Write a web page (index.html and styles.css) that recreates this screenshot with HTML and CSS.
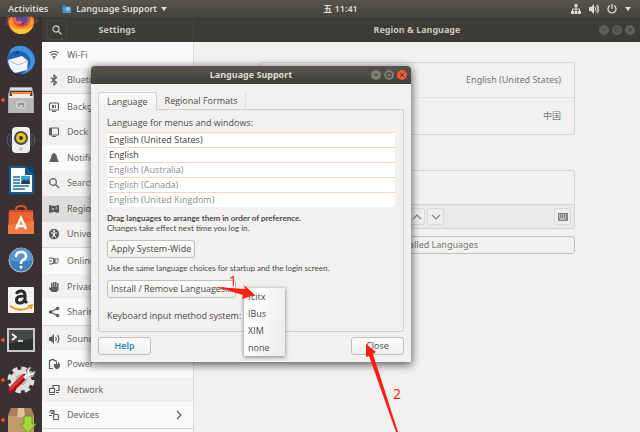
FILE: index.html
```html
<!DOCTYPE html>
<html lang="en">
<head>
<meta charset="utf-8">
<title>Language Support</title>
<link rel="stylesheet" href="styles.css">
</head>
<body>
<div class="desktop">
  <header class="topbar">
    <div class="topbar-left">
      <button class="bar-item">Activities</button>
      <button class="bar-item app-menu">
        <svg width="10" height="10" viewBox="0 0 10 10"><path d="M0 1h4l1 1h4v7H0z" fill="#2f71a5"/><path d="M1 3h8v6H1z" fill="#4d95c6"/><circle cx="6" cy="5" r="2" fill="#9bcbe8"/></svg>
        Language Support
        <svg width="6" height="4" viewBox="0 0 6 4"><path d="M0 0h6L3 4z" fill="#dfdbd2"/></svg>
      </button>
    </div>
    <time class="clock">五 11:41</time>
    <div class="topbar-right">
      <svg width="10" height="10" viewBox="0 0 10 10" fill="#dfdbd2"><path d="M3.500 0h3v3h-3zM0 7h3v3H0zM3.500 7h3v3h-3zM7 7h3v3H7z"/><path d="M5 3v4M1.500 7V5h7v2" fill="none" stroke="#dfdbd2"/></svg>
      <svg width="10" height="10" viewBox="0 0 10 10" fill="#dfdbd2"><path d="M0 3h2l3-3v10L2 7H0z"/><path d="M6 3q1.500 2 0 4M7.500 1.500q2.500 3.500 0 7M8.500 .5q3 4.500 0 9" fill="none" stroke="#dfdbd2" stroke-width=".9"/></svg>
      <svg width="10" height="10" viewBox="0 0 10 10" fill="none" stroke="#dfdbd2" stroke-width="1.300"><path d="M3 1.500a4 4 0 1 0 4 0M5 0v5"/></svg>
      <svg width="6" height="4" viewBox="0 0 6 4"><path d="M0 0h6L3 4z" fill="#dfdbd2"/></svg>
    </div>
  </header>

  <nav class="dock" aria-label="Dock">
    <svg class="app" viewBox="0 -2 30 30"><circle cx="15" cy="14" r="13" fill="#e8492f"/><path d="M3 14q-1 11 12 13 12-1 13-13l-3-6q0 12-10 12Q6 20 6 8z" fill="#f9922b"/><path d="M4 18q3 9 11 9 9 0 13-9-4 5-12 4-8 1-12-4z" fill="#fcc63c"/><circle cx="16" cy="12" r="6" fill="#5a3aa0"/><path d="M8 11q4 5 9 3-2 5-7 2z" fill="#f36c2c"/></svg>
    <svg class="app" viewBox="0 0 30 30"><circle cx="15" cy="15" r="14" fill="#1f62b6"/><path d="M5 4Q15-3 24 5q8 9 3 17-4 6-11 7 10-7 8-15Q21 5 10 6q-6 1-8 6z" fill="#3f93dc"/><path d="M2 15l14-4 6 5-1 9-12 3q-6-4-7-13z" fill="#f4f5f7"/><path d="M2 15l10 5 10-4" fill="none" stroke="#b8bdc9"/><path d="M8 8l5-3-1 4z" fill="#163f7d"/></svg>
    <svg class="app running" viewBox="0 0 30 30"><path d="M4 2h22l2 8v18H2V10z" fill="#a5a5a3"/><path d="M5 3h20l1 2H4z" fill="#dedede"/><path d="M4 6h22v5H4z" fill="#5b3427"/><path d="M5 7h20v2H5z" fill="#f2873b"/><path d="M6 9h18v2H6z" fill="#f8eee2"/><rect x="3" y="12" width="24" height="16" rx="1" fill="#b9b9b7"/><rect x="3" y="11" width="24" height="2" fill="#ededeb"/><rect x="11" y="17" width="8" height="6" rx="1" fill="#969694" stroke="#ededed"/><path d="M13 21h4" stroke="#fff"/></svg>
    <svg class="app" viewBox="0 0 30 30"><path d="M4 8q-6 7 0 14M26 8q6 7 0 14M6 9q-4 6 0 12M24 9q4 6 0 12" fill="none" stroke="#4d5b7e"/><rect x="6" y="2" width="18" height="26" rx="4" fill="#eeeeec"/><circle cx="15" cy="13" r="7" fill="#4b4b4b"/><circle cx="15" cy="13" r="5" fill="#e5c51c"/><circle cx="15" cy="13" r="2" fill="#333"/><circle cx="15" cy="24" r="2" fill="#c9c9c7"/></svg>
    <svg class="app" viewBox="0 0 30 30"><path d="M3 1h17l8 8v20H3z" fill="#155b94"/><path d="M5 3h14v7h7v17H5z" fill="#fff"/><path d="M19 1l9 9V1z" fill="#0f426e"/><path d="M7 12h7M7 15h7M7 18h7M7 21h16M7 24h12" stroke="#1b6aa5" stroke-width="1.300"/><rect x="15" y="11" width="9" height="8" fill="#35a5dc"/><path d="M15 18l3-4 2 2 2-2 2 4v1h-9z" fill="#243f52"/></svg>
    <svg class="app" viewBox="0 0 30 30"><path d="M10 7V4q0-3 5-3t5 3v3" fill="none" stroke="#d6532b" stroke-width="2"/><path d="M3 5h24l1 24H2z" fill="#e9652f"/><path d="M2 20l26-4v13H2z" fill="#f47a42"/><path d="M3 5h24v2H3z" fill="#cc4f26"/><path d="M10 24l5-11 5 11M10 21h10" fill="none" stroke="#fff" stroke-width="2.400"/></svg>
    <svg class="app" viewBox="0 0 30 30"><circle cx="15" cy="15" r="12" fill="#3c7fba" stroke="#a7cbe5"/><path d="M3 15a12 12 0 0 1 24 0q-12 4-24 0z" fill="#5797cc"/><path d="M10 12q0-5 5-5t5 4q0 3-3 4-2 1-2 4" fill="none" stroke="#fff" stroke-width="2.500"/><circle cx="15" cy="22" r="1.600" fill="#fff"/></svg>
    <svg class="app" viewBox="0 0 30 30"><rect x="2" y="2" width="26" height="26" rx="1" fill="#f3f3f2"/><path d="M10.500 9q1-3 4.500-3t4 3.500V16l2 2M19 11q-8.500-.5-8.500 4 0 3 3.500 3t5-4" fill="none" stroke="#2c2c2c" stroke-width="3"/><path d="M4 21q10 7 20 1M22 21l4-1-1 4" fill="none" stroke="#f49a1b" stroke-width="1.800"/></svg>
    <svg class="app running" viewBox="0 0 30 30"><rect x="1" y="3" width="28" height="24" fill="#c9c9c7"/><rect x="3" y="5" width="24" height="20" fill="#2b2e2f"/><path d="M3 5h24v8L3 19z" fill="#444849"/><path d="M6 9l4 3-4 3M12 16h5" fill="none" stroke="#fff" stroke-width="1.600"/></svg>
    <svg class="app running" viewBox="0 0 30 30"><circle cx="15" cy="15" r="11" fill="none" stroke="#deddda" stroke-width="5" stroke-dasharray="5 3.640"/><circle cx="15" cy="15" r="8" fill="#b9b8b5" stroke="#deddda" stroke-width="5"/><path d="M5 25L18 12" stroke="#a51414" stroke-width="6" stroke-linecap="round"/><path d="M4.500 24L17 11.500" stroke="#dd3a31" stroke-width="3" stroke-linecap="round"/><path d="M17 12l4-4q-1-5 4-6l-2 4 2 2 4-2q0 5-5 5l-4 4z" fill="#eeeeec" stroke="#8e8e8b" stroke-width=".8"/></svg>
    <svg class="app running" viewBox="0 0 30 30"><path d="M5 3h20l3 8v19H2V11z" fill="#c19a6c"/><path d="M5 3h20l3 8H2z" fill="#a98158"/><path d="M12 3h6l1 9h-8z" fill="#dcc39f"/><path d="M18 11h8v8h4l-8 9-8-9h4z" fill="#a7d63a" stroke="#6c9a1c"/></svg>
  </nav>

  <main class="settings">
    <header class="headerbar side-head">
      <button class="search" aria-label="Search"><svg width="10" height="10" viewBox="0 0 10 10" fill="none" stroke="#c9c6be" stroke-width="1.300"><circle cx="4" cy="4" r="3"/><path d="M6 6l3.500 3.500"/></svg></button>
      <h1>Settings</h1>
    </header>
    <header class="headerbar main-head">
      <h1>Region &amp; Language</h1>
      <div class="win-buttons dim">
        <button aria-label="Minimize"><svg viewBox="0 0 10 10"><path d="M3 5h4"/></svg></button>
        <button aria-label="Maximize"><svg viewBox="0 0 10 10"><path d="M3 3h4v4H3z"/></svg></button>
        <button aria-label="Close window"><svg viewBox="0 0 10 10"><path d="M3 3l4 4M7 3L3 7"/></svg></button>
      </div>
    </header>

    <nav class="sidebar" aria-label="Settings">
      <a href="#"><svg viewBox="0 0 12 12"><path class="line" d="M1.500 4q4.500-3.500 9 0M3 6.200q3-2.500 6 0M4.500 8.200q1.500-1 3 0"/><path d="M5 8.500h2L6 10.500z"/></svg>Wi-Fi</a>
      <a href="#" class="group-end"><svg viewBox="0 0 12 12"><path class="line" d="M3 3.500l5.500 5L6 11V1l2.500 2.500-5.500 5"/></svg>Bluetooth</a>
      <a href="#"><svg viewBox="0 0 12 12"><rect class="line" x="1.500" y="2" width="9" height="7" rx="1"/><path d="M4 4h2v3H4zM7 4h1v3H7zM4 10h4v1H4z"/></svg>Background</a>
      <a href="#"><svg viewBox="0 0 12 12"><rect class="line" x="1.500" y="2" width="9" height="7" rx="1"/><path d="M2 2h2v7H2zM4 10h4v1H4z"/></svg>Dock</a>
      <a href="#"><svg viewBox="0 0 12 12"><path d="M6 1q3 1 3 5l1.500 3v1h-9V9L3 6q0-4 3-5z"/></svg>Notifications</a>
      <a href="#"><svg viewBox="0 0 12 12"><circle class="line" cx="5" cy="5" r="3.300"/><path class="line" d="M7.500 7.500L11 11"/></svg>Search</a>
      <a href="#" class="selected"><svg viewBox="0 0 12 12"><path d="M1 2l5 1 5-1v8l-5-1-5 1z"/><path d="M4 5h2v2H4zM8 4h1v2H8z" fill="#aaa"/></svg>Region &amp; Language</a>
      <a href="#" class="group-end"><svg viewBox="0 0 12 12"><circle cx="6" cy="6" r="5.200"/><circle cx="6" cy="3" r="1" fill="#fff"/><path d="M3 5h6M6 5v2M6 6l-1.500 3.500M6 6l1.500 3.500" stroke="#fff"/></svg>Universal Access</a>
      <a href="#"><svg viewBox="0 0 12 12"><path class="line" d="M1 3h2q3 0 3 3T3 9H1M1 6h3M7 3v6M8 4h3M8 8h2M9 6h2"/></svg>Online Accounts</a>
      <a href="#"><svg viewBox="0 0 12 12"><path d="M3 2h1.500v4H5V1h1.500v5H7V1h1.500v5H9V2h1.500v7l-2 2H4L1 8V6l2 1z"/></svg>Privacy</a>
      <a href="#" class="group-end"><svg viewBox="0 0 12 12"><path class="line" d="M9.500 2.500L2.500 6l7 3.500"/><circle cx="2.500" cy="6" r="1.800"/><circle cx="9.500" cy="2.500" r="1.800"/><circle cx="9.500" cy="9.500" r="1.800"/></svg>Sharing</a>
      <a href="#"><svg viewBox="0 0 12 12"><path d="M1 4h2l3-3v10L3 8H1z"/><path class="line" d="M7.500 4q1.500 2 0 4M9.500 2q2.500 4 0 8"/></svg>Sound</a>
      <a href="#"><svg viewBox="0 0 12 12"><path class="line" d="M5 10.500H1.500v-8H3v-1h3v1h2V4"/><path d="M6 6h2V4h1v2h1V4h1v2h1v3l-2 2H8L6 9z"/></svg>Power</a>
      <a href="#"><svg viewBox="0 0 12 12"><path class="line" d="M5 4V1.500h6v5H8M1.500 4.500h5v4h-5z"/><path d="M1 10h6v1H1zM8 8h3v1H8z"/></svg>Network</a>
      <a href="#" class="group-end"><svg viewBox="0 0 12 12"><path class="line" d="M1 3h5M2 1.500h4v3H3"/><rect class="line" x="5.500" y="5.500" width="5" height="5" rx="1"/><path d="M1 6h3v1H1z"/></svg>Devices<svg class="chevron" viewBox="0 0 12 12"><path class="line" d="M4 2l4 4-4 4"/></svg></a>
    </nav>

    <section class="content">
      <div class="panel formats">
        <div class="panel-row"><span>English (United States)</span></div>
        <div class="panel-row"><span>中国</span></div>
      </div>
      <div class="panel sources">
        <div class="source-list"></div>
        <div class="toolbar">
          <button aria-label="Move up"><svg viewBox="0 0 10 10"><path class="line" d="M1 7l4-4 4 4"/></svg></button>
          <button aria-label="Move down"><svg viewBox="0 0 10 10"><path class="line" d="M1 3l4 4 4-4"/></svg></button>
          <button class="keyboard" aria-label="Show keyboard layout"><svg viewBox="0 0 10 10"><path d="M0 1h10v8H0z"/><path d="M1 3h8M1 5h8" stroke="#eee" stroke-dasharray="1 1"/><path d="M2 7h6" stroke="#eee"/></svg></button>
        </div>
      </div>
      <button class="btn manage">Manage Installed Languages</button>
    </section>
  </main>

  <span class="terminal-tab">jack@ja</span>

  <section class="dialog" role="dialog" aria-labelledby="dialog-title">
    <header class="titlebar">
      <h2 id="dialog-title">Language Support</h2>
      <div class="win-buttons">
        <button aria-label="Minimize dialog"><svg viewBox="0 0 10 10"><path d="M3 5h4"/></svg></button>
        <button aria-label="Maximize dialog"><svg viewBox="0 0 10 10"><path d="M3 3h4v4H3z"/></svg></button>
        <button class="close" aria-label="Close dialog"><svg viewBox="0 0 10 10"><path d="M3 3l4 4M7 3L3 7"/></svg></button>
      </div>
    </header>
    <div class="dialog-body">
      <div class="tabs" role="tablist">
        <button role="tab" aria-selected="true">Language</button>
        <button role="tab" aria-selected="false">Regional Formats</button>
      </div>
      <div class="tab-page">
        <p class="label">Language for menus and windows:</p>
        <ul class="languages">
          <li>English (United States)</li>
          <li>English</li>
          <li class="inactive">English (Australia)</li>
          <li class="inactive">English (Canada)</li>
          <li class="inactive">English (United Kingdom)</li>
        </ul>
        <p class="note"><b>Drag languages to arrange them in order of preference.</b><br>Changes take effect next time you log in.</p>
        <button class="btn">Apply System-Wide</button>
        <p class="note apply-note">Use the same language choices for startup and the login screen.</p>
        <button class="btn">Install / Remove Languages...</button>
        <div class="input-method">
          <span id="method-label">Keyboard input method system:</span>
          <div class="menu" role="listbox" aria-labelledby="method-label">
            <button role="option">fcitx</button>
            <button role="option">IBus</button>
            <button role="option">XIM</button>
            <button role="option">none</button>
          </div>
        </div>
      </div>
      <footer class="actions">
        <button class="btn help">Help</button>
        <button class="btn">Close</button>
      </footer>
    </div>
  </section>

  <svg class="annotations" width="640" height="432" viewBox="0 0 640 432" fill="#fc1f12">
    <path d="M216 287l29 2-1-4 11 10-13 4 1-4z"/>
    <path d="M366 344l10 8-3 2 25 78h-2L369 356l-3 1z"/>
    <text x="229" y="286">1</text>
    <text x="393" y="399">2</text>
  </svg>
</div>
</body>
</html>
```
FILE: styles.css
```css
* { box-sizing: border-box; }

body {
  margin: 0;
  font: 9px/12px "Noto Sans", "Noto Sans CJK SC", sans-serif;
  color: #4a4a48;
}

button {
  margin: 0;
  padding: 0;
  border: 0;
  background: none;
  font: inherit;
  color: inherit;
}

h1, h2, p, ul { margin: 0; padding: 0; font-size: inherit; }
svg { display: block; flex: none; }
a { color: inherit; text-decoration: none; }

.desktop {
  position: relative;
  display: grid;
  grid-template: 17px minmax(0, 1fr) / 42px minmax(0, 1fr);
  height: 100vh;
  overflow: hidden;
  background: #3a3133;
}

.topbar {
  grid-column: 1 / -1;
  display: grid;
  grid-template-columns: 1fr auto 1fr;
  align-items: center;
  padding: 0 9px 0 8px;
  background: linear-gradient(#56544c, #45443e);
  color: #dfdbd2;
  font-weight: 600;
}
.topbar-left, .topbar-right, .bar-item { display: flex; align-items: center; }
.topbar-left, .topbar-right { min-width: 0; }
.topbar-left { gap: 14px; }
.bar-item { gap: 4px; white-space: nowrap; }
.clock { padding-left: 42px; }
.topbar-right { justify-content: flex-end; gap: 8px; }

.dock {
  display: flex;
  flex-direction: column;
  align-items: center;
  gap: 10px;
  margin-top: -12px;
  overflow: hidden;
  clip-path: inset(12px 0 0);
}
.app { width: 30px; height: 30px; overflow: visible; }
.running {
  width: 42px;
  padding: 0 6px;
  background: radial-gradient(circle at 3px 15px, #e95420 2px, transparent 2px);
}
.terminal-tab {
  position: absolute;
  top: 14px;
  left: 6px;
  color: rgba(223, 219, 210, 0.25);
}

.settings {
  display: grid;
  grid-template: 25px minmax(0, 1fr) / 152px minmax(0, 1fr);
  background: #f2f1f0;
}

.headerbar {
  display: grid;
  grid-template-columns: 1fr auto 1fr;
  align-items: center;
  background: #3c3b37;
  color: #c9c6be;
  font-weight: bold;
}
.side-head { padding: 0 6px 0 5px; border-right: 1px solid #464540; }
.headerbar h1, .titlebar h2 { grid-column: 2; }
.search {
  display: grid;
  place-items: center;
  width: 20px;
  height: 20px;
  border: 1px solid #484742;
  border-radius: 3px;
}
.main-head { padding: 0 5px; }

.win-buttons { display: flex; gap: 3px; justify-content: flex-end; }
.win-buttons button {
  width: 10px;
  height: 10px;
  border-radius: 50%;
  background: #7b7a73;
}
.win-buttons path { fill: none; stroke: #45443e; }
.win-buttons .close { background: #ee5b2c; }
.win-buttons.dim button { background: #5e5d57; }

.sidebar {
  display: flex;
  flex-direction: column;
  padding-bottom: 3px;
  border-right: 1px solid #dcdbd9;
  background: #fafafa;
  color: #686866;
}
.sidebar a {
  display: flex;
  flex: 1 1 0;
  align-items: center;
  gap: 7px;
  padding: 0 8px 0 6px;
  white-space: nowrap;
}
.sidebar a:nth-child(even) { background: #f2f1f0; }
.sidebar a.selected { background: #dddcda; color: #555553; }
.sidebar .group-end { border-bottom: 1px solid #d5d4d2; }
.sidebar svg { width: 12px; height: 12px; fill: #5d5d5b; }
.sidebar .chevron { margin-left: auto; }
.line { fill: none; stroke: #5d5d5b; stroke-width: 1.2; }

.content {
  display: flex;
  flex-direction: column;
  width: 72%;
  max-width: 316px;
  margin: 0 auto;
  padding-top: 20px;
  color: #777775;
}
.panel { border: 1px solid #d6d5d3; border-radius: 2px; }
.panel-row {
  display: flex;
  justify-content: flex-end;
  align-items: center;
  height: 34px;
  padding-right: 13px;
}
.panel-row + .panel-row { height: 37px; border-top: 1px solid #e3e2e0; }
.sources { margin: 35px 0 7px; }
.source-list { height: 34px; border-bottom: 1px solid #d6d5d3; }
.toolbar {
  display: flex;
  align-items: center;
  gap: 2px;
  height: 23px;
  padding: 0 3px 0 148px;
  background: #eaeae8;
}
.toolbar button {
  display: grid;
  place-items: center;
  width: 17px;
  height: 17px;
  border: 1px solid #dad9d7;
  border-radius: 3px;
  background: #efeeed;
}
.toolbar svg { width: 10px; height: 10px; fill: #858583; }
.toolbar .line { fill: none; stroke: #858583; }
.toolbar .keyboard { margin-left: auto; }

.btn {
  height: 18px;
  padding: 0 3px;
  border: 1px solid #c2c0bd;
  border-radius: 3px;
  background: linear-gradient(#fbfbfa, #f1f0ef);
  white-space: nowrap;
}
.manage { background: #f2f1f0; }

.dialog {
  position: absolute;
  top: 66px;
  left: 91px;
  width: 320px;
  border-radius: 4px 4px 0 0;
  background: #f2f1f0;
  box-shadow: 0 2px 9px 1px rgba(0, 0, 0, 0.6);
}
.titlebar {
  display: grid;
  grid-template-columns: 1fr auto 1fr;
  align-items: center;
  height: 18px;
  padding: 0 4px;
  border-radius: 4px 4px 0 0;
  background: linear-gradient(#57554d, #403f3a);
  color: #dfdbd2;
}
.dialog-body { padding: 8px 7px 7px; font-family: "Open Sans", sans-serif; }

.tabs { display: flex; }
.tabs button { height: 17px; padding: 0 8px; border-right: 1px solid #dfdedc; }
.tabs [aria-selected="true"] {
  height: 18px;
  margin-bottom: -1px;
  border: 1px solid #d1d0ce;
  border-bottom: 0;
  border-radius: 3px 3px 0 0;
  background: linear-gradient(#fafafa, #f2f1f0);
}
.tab-page {
  display: flex;
  flex-direction: column;
  align-items: flex-start;
  height: 223px;
  padding: 7px 8px;
  border: 1px solid #d1d0ce;
  border-radius: 0 2px 2px 2px;
}
.languages {
  align-self: stretch;
  margin: 3px 0 6px;
  background: #fff;
  list-style: none;
}
.languages li {
  height: 15px;
  padding: 0 2px;
  border-top: 1px solid #fbd3c6;
  line-height: 14px;
  color: #3c3c3b;
}
.languages .inactive { color: #8c8c8a; }
.note {
  margin-bottom: 7px;
  font: 8px/10px Lato, sans-serif;
  white-space: nowrap;
}
.apply-note { margin: 5px 0 7px; }

.input-method { position: relative; margin-top: 12px; white-space: nowrap; }
.menu {
  position: absolute;
  top: -22px;
  left: 137px;
  width: 41px;
  background: linear-gradient(100deg, #fbfbfa 30%, #ecebea);
  box-shadow: 0 1px 4px rgba(0, 0, 0, 0.5);
}
.menu button { display: block; width: 100%; height: 17px; padding: 0 4px; text-align: left; }

.actions { display: flex; justify-content: space-between; padding-top: 5px; }
.actions .btn { width: 53px; }
.help { color: #1b84b4; font-weight: 600; }

.annotations {
  position: absolute;
  top: 0;
  left: 0;
  font: 14px "Noto Sans", sans-serif;
  pointer-events: none;
}
```
